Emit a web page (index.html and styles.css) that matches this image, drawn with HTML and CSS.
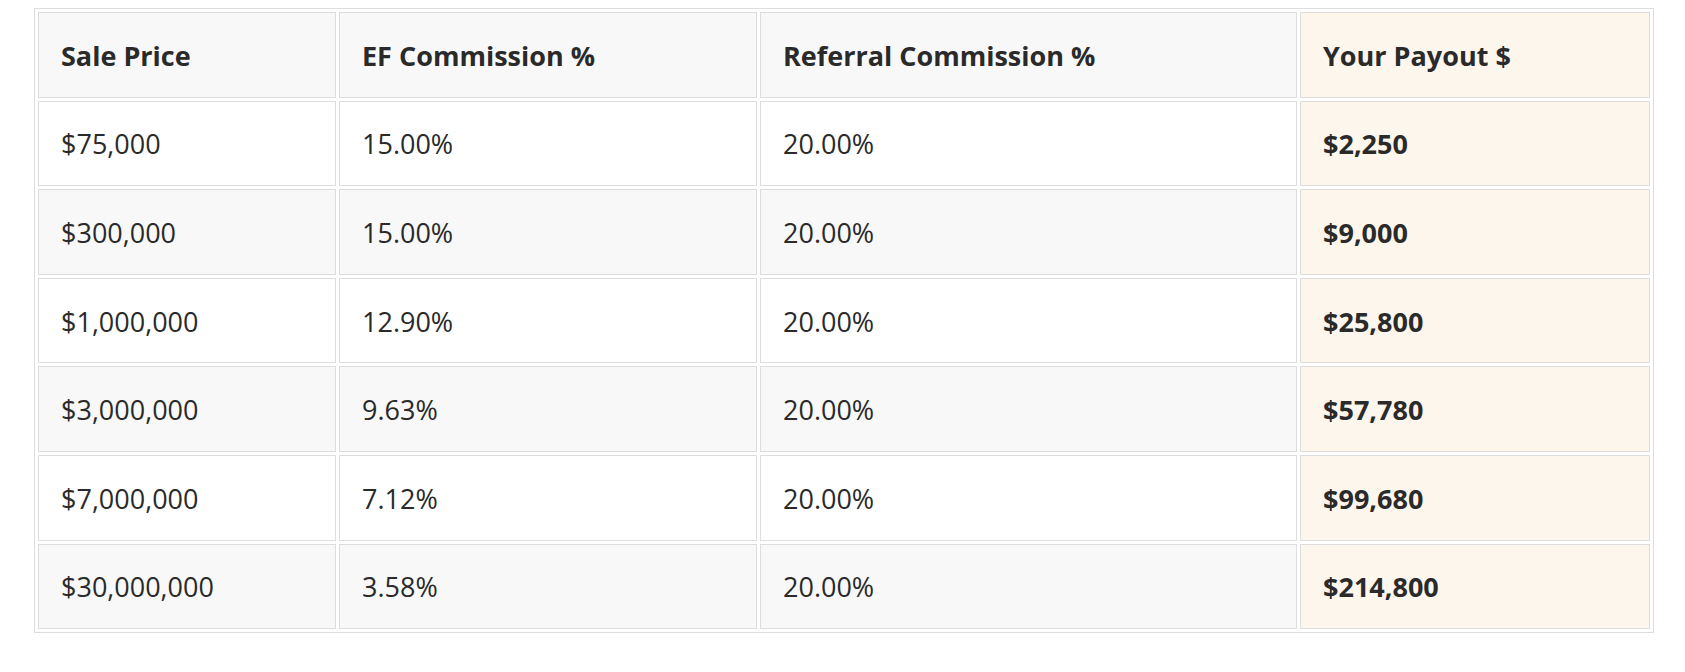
FILE: index.html
```html
<!DOCTYPE html>
<html lang="en">
<head>
<meta charset="utf-8">
<title>Payout table</title>
<link rel="stylesheet" href="styles.css">
</head>
<body>
<div class="wrap">
<table class="payout">
  <colgroup>
    <col class="c1"><col class="c2"><col class="c3"><col class="c4">
  </colgroup>
  <thead>
    <tr>
      <th>Sale Price</th>
      <th>EF Commission %</th>
      <th>Referral Commission %</th>
      <th class="hl">Your Payout $</th>
    </tr>
  </thead>
  <tbody>
    <tr><td>$75,000</td><td>15.00%</td><td>20.00%</td><td class="hl">$2,250</td></tr>
    <tr class="alt"><td>$300,000</td><td>15.00%</td><td>20.00%</td><td class="hl">$9,000</td></tr>
    <tr><td>$1,000,000</td><td>12.90%</td><td>20.00%</td><td class="hl">$25,800</td></tr>
    <tr class="alt"><td>$3,000,000</td><td>9.63%</td><td>20.00%</td><td class="hl">$57,780</td></tr>
    <tr><td>$7,000,000</td><td>7.12%</td><td>20.00%</td><td class="hl">$99,680</td></tr>
    <tr class="alt"><td>$30,000,000</td><td>3.58%</td><td>20.00%</td><td class="hl">$214,800</td></tr>
  </tbody>
</table>
</div>
</body>
</html>
```
FILE: styles.css
```css
html, body {
  margin: 0;
  padding: 0;
  background: #ffffff;
}
.wrap {
  padding: 8px 0 0 34px;
}
.payout {
  border-collapse: separate;
  border-spacing: 3px;
  border: 1px solid #dddddd;
  width: 1620px;
  table-layout: fixed;
  font-family: "Open Sans", "Noto Sans", sans-serif;
  font-size: 27px;
  line-height: 40px;
  color: #2a2a2a;
}
.c1 { width: 298px; }
.c2 { width: 418px; }
.c3 { width: 537px; }
.c4 { width: 350px; }
.payout th,
.payout td {
  border: 1px solid #dddddd;
  padding: 22.8px 22px 20.8px;
  height: 85.6px;
  box-sizing: border-box;
  text-align: left;
  vertical-align: middle;
  background: #ffffff;
}
.payout th {
  font-weight: 700;
  background: #f8f8f8;
}
.payout tr.alt td {
  background: #f8f8f8;
}
.payout th.hl,
.payout td.hl,
.payout tr.alt td.hl {
  background: #fdf6ec;
  font-weight: 700;
}
```
